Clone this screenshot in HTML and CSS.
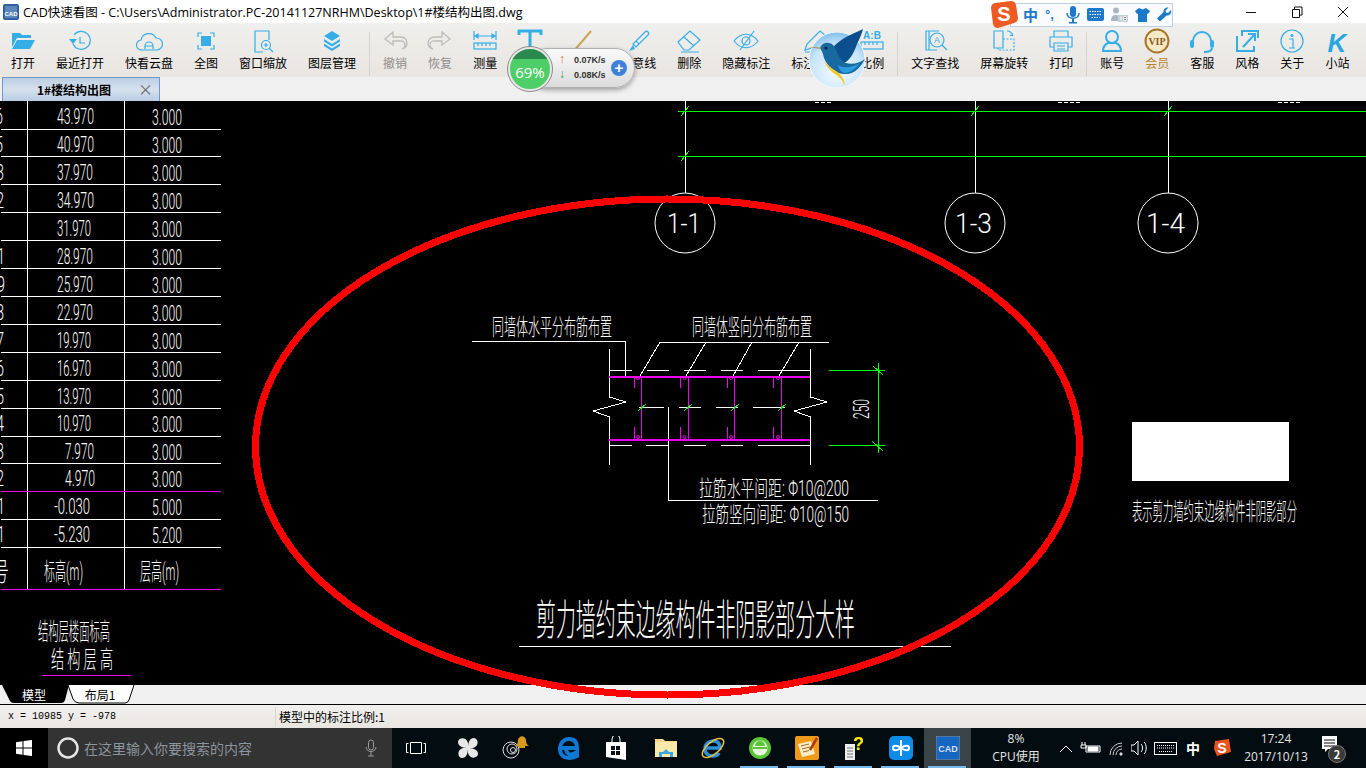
FILE: index.html
```html
<!DOCTYPE html>
<html lang="zh-CN">
<head>
  <meta charset="UTF-8">
  <link rel="stylesheet" href="styles.css">
  <title>CAD快速看图</title>
</head>
<body>
<div class="screen">

  <!-- Title bar -->
  <div class="titlebar">
    <svg class="app-icon" width="18" height="18" viewBox="0 0 18 18"><rect x="1" y="1" width="16" height="16" rx="2" fill="#2f5f9e"/><rect x="3" y="3" width="12" height="12" fill="#5f86b8"/><text x="9" y="13" class="app-icon-text">CAD</text></svg>
    <div class="title-text">CAD快速看图 - C:\Users\Administrator.PC-20141127NRHM\Desktop\1#楼结构出图.dwg</div>
    <div class="win-controls">
      <svg width="46" height="20" viewBox="0 0 46 20"><path d="M18 10.500h10" stroke="#111"/></svg>
      <svg width="46" height="20" viewBox="0 0 46 20"><path d="M18.500 7.500h7v8h-7zM20.500 7.500v-2.500h7.500v8h-2.500" fill="none" stroke="#111"/></svg>
      <svg width="46" height="20" viewBox="0 0 46 20"><path d="M18 5l10 10M28 5l-10 10" stroke="#111"/></svg>
    </div>
  </div>

  <!-- Toolbar -->
  <div class="toolbar">
    <div class="tool"><svg class="tool-icon" viewBox="0 0 28 26"><path d="M3 5h8l2 2h9v3H8l-5 9z" fill="#35aee8"/><path d="M8 12h18l-5 9H3z" fill="#35aee8"/></svg><span>打开</span></div>
    <div class="tool"><svg class="tool-icon line" viewBox="0 0 28 26"><path d="M8 7a9 9 0 1 1-1 9"/><path d="M14 9v6h5"/><path d="M3 11h8l-4 5z" class="solid"/></svg><span>最近打开</span></div>
    <div class="tool"><svg class="tool-icon line" viewBox="0 0 28 26"><path d="M7 22a5 5 0 0 1-1-10 8 8 0 0 1 15-2 6 6 0 0 1 1 12z"/><path d="M10 21v-3a4 4 0 0 1 8 0v3M10 18h8"/></svg><span>快看云盘</span></div>
    <div class="tool"><svg class="tool-icon line" viewBox="0 0 28 26"><path d="M6 9V5h4M18 5h4v4M22 17v4h-4M10 21H6v-4"/><rect x="9" y="8" width="10" height="10" class="solid"/></svg><span>全图</span></div>
    <div class="tool"><svg class="tool-icon line" viewBox="0 0 28 26"><path d="M20 12V3H6v21h8"/><circle cx="17" cy="17" r="4.500"/><path d="M20 20l4 4M15 17h4M17 15v4"/></svg><span>窗口缩放</span></div>
    <div class="tool"><svg class="tool-icon" viewBox="0 0 28 26"><path d="M14 3l8 5-8 5-8-5z" fill="#35aee8"/><path d="M6 11l8 5 8-5v2.500l-8 5-8-5zM6 15.500l8 5 8-5V18l-8 5-8-5z" fill="#35aee8"/></svg><span>图层管理</span></div>
    <div class="tool-sep"></div>
    <div class="tool tool-off"><svg class="tool-icon line-grey" viewBox="0 0 28 26"><path d="M12 4l-8 7 8 6v-4h7a4 4 0 0 1 2 8c4-1 5-4 5-6a6 6 0 0 0-6-6h-8z"/></svg><span>撤销</span></div>
    <div class="tool tool-off"><svg class="tool-icon line-grey" viewBox="0 0 28 26"><path d="M16 4l8 7-8 6v-4H9a4 4 0 0 0-2 8c-4-1-5-4-5-6a6 6 0 0 1 6-6h8z"/></svg><span>恢复</span></div>
    <div class="tool"><svg class="tool-icon line" viewBox="0 0 28 26"><path d="M3 3v9M25 3v9M4 8h20M4 8l3-2v4zM24 8l-3-2v4z"/><rect x="3" y="15" width="22" height="6"/><path d="M7 15v3M11 15v3M15 15v3M19 15v3"/></svg><span>测量</span></div>
    <div class="tool"><svg class="tool-icon line" viewBox="0 0 28 26"><path d="M3 7V3h22v4M14 3v21M9 24h10" stroke-width="3"/></svg><span>文字</span></div>
    <div class="tool tool-line"><svg class="tool-icon" viewBox="0 0 28 26"><path d="M6 24L24 3" stroke="#c9a55a" stroke-width="2"/></svg><span>画直线</span></div>
    <div class="tool"><svg class="tool-icon line" viewBox="0 0 28 26"><path d="M12 13L21 4a2 2 0 0 1 3 3l-9 9zM12 13l-3 3 3 3 3-3"/><path d="M9 17l-4 6 6-2" class="solid"/></svg><span>任意线</span></div>
    <div class="tool"><svg class="tool-icon line" viewBox="0 0 28 26"><path d="M3 14L15 3l10 9-11 10H9zM9 9l10 9M6 24h18"/></svg><span>删除</span></div>
    <div class="tool"><svg class="tool-icon line" viewBox="0 0 28 26"><path d="M2 13c7-9 17-9 24 0-7 9-17 9-24 0z"/><circle cx="14" cy="13" r="4"/><path d="M8 22L22 3"/></svg><span>隐藏标注</span></div>
    <div class="tool"><svg class="tool-icon line" viewBox="0 0 28 26"><path d="M4 22l2-6L19 3l5 4-13 13zM4 24h20"/></svg><span>标注样式</span></div>
    <div class="tool"><svg class="tool-icon line" viewBox="0 0 28 26"><text x="14" y="11" class="ab-text">A:B</text><rect x="3" y="14" width="22" height="7"/><path d="M7 14v3M11 14v3M15 14v3M19 14v3"/></svg><span>比例</span></div>
    <div class="tool-sep"></div>
    <div class="tool"><svg class="tool-icon line" viewBox="0 0 28 26"><path d="M18 3H5v19h11M8 3v19"/><circle cx="16" cy="12" r="7"/><path d="M21 17l5 5"/><text x="16" y="15" class="find-text">A</text></svg><span>文字查找</span></div>
    <div class="tool"><svg class="tool-icon line" viewBox="0 0 28 26"><path d="M4 3h9v17H4z"/><path d="M13 11h11v11H8v-2" stroke-dasharray="2 1.500"/><path d="M17 3c3 0 5 2 6 5M23 8l-3-1"/></svg><span>屏幕旋转</span></div>
    <div class="tool"><svg class="tool-icon line" viewBox="0 0 28 26"><path d="M7 9V3h14v6M7 19H3V9h22v10h-4"/><path d="M7 15h14v8H7zM10 18h8M10 21h8"/></svg><span>打印</span></div>
    <div class="tool-sep"></div>
    <div class="tool"><svg class="tool-icon line thick" viewBox="0 0 28 26"><circle cx="14" cy="9" r="6"/><path d="M5 23c0-5 3-7 5-8h8c2 1 5 3 5 8z"/></svg><span>账号</span></div>
    <div class="tool tool-vip"><svg class="tool-icon" viewBox="0 0 28 26"><circle cx="14" cy="13" r="11.500" fill="#f6e9c8" stroke="#a8742a" stroke-width="2"/><text x="14" y="16.500" class="vip-text">VIP</text></svg><span>会员</span></div>
    <div class="tool"><svg class="tool-icon line thick" viewBox="0 0 28 26"><path d="M5 13a9 9 0 0 1 18 0"/><rect x="2" y="12" width="4" height="8" rx="2" class="solid"/><rect x="22" y="12" width="4" height="8" rx="2" class="solid"/><path d="M24 20c0 3-3 4-8 4"/></svg><span>客服</span></div>
    <div class="tool"><svg class="tool-icon line thick" viewBox="0 0 28 26"><path d="M25 10V3H9v5M4 8v15h17v-5"/><path d="M10 19L22 6M15 6h7v7"/></svg><span>风格</span></div>
    <div class="tool"><svg class="tool-icon line" viewBox="0 0 28 26"><circle cx="14" cy="13" r="11"/><circle cx="14" cy="7.500" r="1.500" class="solid"/><path d="M11 11h4v9M11 20h6" /></svg><span>关于</span></div>
    <div class="tool"><svg class="tool-icon" viewBox="0 0 28 26"><text x="14" y="24" class="k-text">K</text></svg><span>小站</span></div>
  </div>

  <!-- Drawing tabs -->
  <div class="tabstrip">
    <div class="doc-tab"><span>1#楼结构出图</span><i class="doc-close">×</i></div>
  </div>

  <!-- Drawing canvas, viewBox uses screen coordinates -->
  <div class="canvas">
    <svg class="drawing" viewBox="0 101 1366 584">
      <!-- floor table -->
      <g class="cad-white">
        <path d="M27.500 101V589M124.500 101V589"/>
        <path d="M1 129.500H221M1 156.500H221M1 184.500H221M1 212.500H221M1 240.500H221M1 268.500H221M1 296.500H221M1 324.500H221M1 352.500H221M1 380.500H221M1 408.500H221M1 436.500H221M1 463.500H221M1 519.500H221M1 547.500H221"/>
      </g>
      <g class="cad-pink">
        <path d="M1 491.500H221M1 589.500H221M42 675.500H131"/>
      </g>
      <g class="cad-num">
        <text x="57" y="124" textLength="37" lengthAdjust="spacingAndGlyphs">43.970</text>
        <text x="57" y="152" textLength="37" lengthAdjust="spacingAndGlyphs">40.970</text>
        <text x="57" y="180" textLength="36" lengthAdjust="spacingAndGlyphs">37.970</text>
        <text x="57" y="208" textLength="37" lengthAdjust="spacingAndGlyphs">34.970</text>
        <text x="57" y="236" textLength="34" lengthAdjust="spacingAndGlyphs">31.970</text>
        <text x="57" y="264" textLength="36" lengthAdjust="spacingAndGlyphs">28.970</text>
        <text x="57" y="292" textLength="36" lengthAdjust="spacingAndGlyphs">25.970</text>
        <text x="57" y="320" textLength="36" lengthAdjust="spacingAndGlyphs">22.970</text>
        <text x="57" y="348" textLength="34" lengthAdjust="spacingAndGlyphs">19.970</text>
        <text x="57" y="376" textLength="34" lengthAdjust="spacingAndGlyphs">16.970</text>
        <text x="57" y="404" textLength="34" lengthAdjust="spacingAndGlyphs">13.970</text>
        <text x="57" y="431" textLength="34" lengthAdjust="spacingAndGlyphs">10.970</text>
        <text x="65" y="459" textLength="29" lengthAdjust="spacingAndGlyphs">7.970</text>
        <text x="65" y="486" textLength="30" lengthAdjust="spacingAndGlyphs">4.970</text>
        <text x="54" y="514" textLength="36" lengthAdjust="spacingAndGlyphs">-0.030</text>
        <text x="54" y="542" textLength="36" lengthAdjust="spacingAndGlyphs">-5.230</text>
        <text x="152" y="125" textLength="30" lengthAdjust="spacingAndGlyphs">3.000</text>
        <text x="152" y="153" textLength="30" lengthAdjust="spacingAndGlyphs">3.000</text>
        <text x="152" y="181" textLength="30" lengthAdjust="spacingAndGlyphs">3.000</text>
        <text x="152" y="209" textLength="30" lengthAdjust="spacingAndGlyphs">3.000</text>
        <text x="152" y="237" textLength="30" lengthAdjust="spacingAndGlyphs">3.000</text>
        <text x="152" y="265" textLength="30" lengthAdjust="spacingAndGlyphs">3.000</text>
        <text x="152" y="293" textLength="30" lengthAdjust="spacingAndGlyphs">3.000</text>
        <text x="152" y="321" textLength="30" lengthAdjust="spacingAndGlyphs">3.000</text>
        <text x="152" y="349" textLength="30" lengthAdjust="spacingAndGlyphs">3.000</text>
        <text x="152" y="377" textLength="30" lengthAdjust="spacingAndGlyphs">3.000</text>
        <text x="152" y="405" textLength="30" lengthAdjust="spacingAndGlyphs">3.000</text>
        <text x="152" y="432" textLength="30" lengthAdjust="spacingAndGlyphs">3.000</text>
        <text x="152" y="460" textLength="30" lengthAdjust="spacingAndGlyphs">3.000</text>
        <text x="152" y="487" textLength="30" lengthAdjust="spacingAndGlyphs">3.000</text>
        <text x="152" y="515" textLength="30" lengthAdjust="spacingAndGlyphs">5.000</text>
        <text x="152" y="543" textLength="30" lengthAdjust="spacingAndGlyphs">5.200</text>
        <text x="-5" y="124" textLength="8" lengthAdjust="spacingAndGlyphs">6</text>
        <text x="-5" y="152" textLength="8" lengthAdjust="spacingAndGlyphs">5</text>
        <text x="-4" y="180" textLength="8" lengthAdjust="spacingAndGlyphs">3</text>
        <text x="-4" y="208" textLength="8" lengthAdjust="spacingAndGlyphs">2</text>
        <text x="-3" y="264" textLength="8" lengthAdjust="spacingAndGlyphs">1</text>
        <text x="-3" y="292" textLength="8" lengthAdjust="spacingAndGlyphs">9</text>
        <text x="-4" y="320" textLength="8" lengthAdjust="spacingAndGlyphs">8</text>
        <text x="-4" y="348" textLength="8" lengthAdjust="spacingAndGlyphs">7</text>
        <text x="-4" y="376" textLength="8" lengthAdjust="spacingAndGlyphs">6</text>
        <text x="-4" y="404" textLength="8" lengthAdjust="spacingAndGlyphs">5</text>
        <text x="-4" y="431" textLength="8" lengthAdjust="spacingAndGlyphs">4</text>
        <text x="-4" y="459" textLength="8" lengthAdjust="spacingAndGlyphs">3</text>
        <text x="-4" y="486" textLength="8" lengthAdjust="spacingAndGlyphs">2</text>
        <text x="-3" y="514" textLength="8" lengthAdjust="spacingAndGlyphs">1</text>
        <text x="-3" y="542" textLength="8" lengthAdjust="spacingAndGlyphs">1</text>
      </g>
      <g class="cad-cn">
        <text x="-8" y="581" font-size="26" textLength="17" lengthAdjust="spacingAndGlyphs">号</text>
        <text x="44" y="580" font-size="24" textLength="39" lengthAdjust="spacingAndGlyphs">标高(m)</text>
        <text x="140" y="580" font-size="24" textLength="39" lengthAdjust="spacingAndGlyphs">层高(m)</text>
        <text x="38" y="640" font-size="24" textLength="72" lengthAdjust="spacingAndGlyphs">结构层楼面标高</text>
        <text x="51" y="668" font-size="24" textLength="62" lengthAdjust="spacingAndGlyphs">结 构 层 高</text>
      </g>

      <!-- axis lines and section bubbles -->
      <g class="cad-white">
        <path d="M685.500 101V193M975.500 101V193M1168.500 101V193"/>
        <path d="M815 102h16M1058 102h24M1278 102h22" stroke-dasharray="4 2"/>
      </g>
      <g class="cad-green">
        <path d="M678 111.500H1366M678 156.500H1366"/>
        <path d="M681 116l8-10M681 161l8-10M971 116l8-10M1164 116l8-10"/>
      </g>
      <g class="cad-round">
        <circle cx="685" cy="223" r="30"/>
        <circle cx="975" cy="223" r="30"/>
        <circle cx="1168" cy="223" r="30"/>
      </g>
      <g class="cad-num cad-big">
        <text x="667" y="233" textLength="34" lengthAdjust="spacingAndGlyphs">1-1</text>
        <text x="955" y="233" textLength="37" lengthAdjust="spacingAndGlyphs">1-3</text>
        <text x="1146" y="233" textLength="39" lengthAdjust="spacingAndGlyphs">1-4</text>
      </g>

      <!-- wall detail -->
      <g class="cad-white">
        <path d="M472 341.500H625.500V376M660 342.500H829"/>
        <path d="M660 342L640 376M706 342L686 376M752 342L733 376M799 342L779 376"/>
        <path d="M609.500 349V397L626 402L593 411L609.500 417V465"/>
        <path d="M810.500 349V397L827 402L794 411L810.500 417V465"/>
        <path d="M609 370.500H632M647 370.500H669M684 370.500H706M721 370.500H743M758 370.500H810"/>
        <path d="M609 445.500H632M646 445.500H668M684 445.500H706M721 445.500H743M758 445.500H810"/>
        <path d="M639 407.500H664M679 407.500H701M716 407.500H738M753 407.500H785"/>
        <path d="M668.500 407V500.500H878"/>
      </g>
      <g class="cad-pink">
        <path class="cad-wide" d="M609 377H810M609 440H810"/>
        <path d="M634.500 376V388M634.500 427V439M680.500 376V388M680.500 427V439M727.500 376V388M727.500 427V439M773.500 376V388M773.500 427V439"/>
        <path d="M641.500 376V439M688.500 376V439M734.500 376V439M781.500 376V439"/>
        <circle cx="638" cy="378" r="1.500"/><circle cx="684.500" cy="378" r="1.500"/><circle cx="731" cy="378" r="1.500"/><circle cx="778" cy="378" r="1.500"/>
        <circle cx="638" cy="437" r="1.500"/><circle cx="684.500" cy="437" r="1.500"/><circle cx="731" cy="437" r="1.500"/><circle cx="778" cy="437" r="1.500"/>
      </g>
      <g class="cad-green">
        <path d="M638 411l8-7M684 411l8-7M731 411l8-7M778 411l8-7"/>
        <path d="M829 370.500H885M829 445.500H885M878.500 363V453"/>
        <path d="M873 366l10 9M872 441l11 10"/>
      </g>
      <g class="cad-num cad-mid">
        <text transform="translate(869 419) rotate(-90)" textLength="20" lengthAdjust="spacingAndGlyphs">250</text>
      </g>
      <g class="cad-cn">
        <text x="492" y="335" font-size="23" textLength="120" lengthAdjust="spacingAndGlyphs">同墙体水平分布筋布置</text>
        <text x="692" y="335" font-size="23" textLength="120" lengthAdjust="spacingAndGlyphs">同墙体竖向分布筋布置</text>
        <text x="699" y="496" font-size="22" textLength="150" lengthAdjust="spacingAndGlyphs">拉筋水平间距: Φ10@200</text>
        <text x="702" y="522" font-size="22" textLength="147" lengthAdjust="spacingAndGlyphs">拉筋竖向间距: Φ10@150</text>
        <text x="536" y="635" font-size="42" textLength="319" lengthAdjust="spacingAndGlyphs">剪力墙约束边缘构件非阴影部分大样</text>
        <text x="1132" y="520" font-size="24" textLength="165" lengthAdjust="spacingAndGlyphs">表示剪力墙约束边缘构件非阴影部分</text>
      </g>
      <path class="cad-white" d="M519 646.500H951"/>
      <rect x="1132" y="422" width="157" height="59" fill="#fff"/>
    </svg>
  </div>

  <!-- Layout tabs -->
  <div class="layout-tabs">
    <div class="layout-tab layout-active">
      <svg class="tab-shape" viewBox="0 0 68 19"><path d="M1 0L9 16Q10 18 13 18H60Q63 18 64 15L68 0z" fill="#000"/></svg>
      <span>模型</span>
    </div>
    <div class="layout-tab">
      <svg class="tab-shape" viewBox="0 0 68 19"><path d="M1 0L6 14Q8 18 12 18H58Q61 18 62 15L67 0" fill="#fff" stroke="#000"/></svg>
      <span>布局1</span>
    </div>
  </div>

  <!-- Status bar -->
  <div class="statusbar">
    <div class="coords">x = 10985 y = -978</div>
    <div class="scale-info">模型中的标注比例:1</div>
  </div>

  <!-- Taskbar -->
  <div class="taskbar">
    <div class="start"><svg width="16" height="16" viewBox="0 0 16 16" fill="#fff"><path d="M0 2.200L6.500 1.300V7.500H0zM7.500 1.100L16 0V7.500H7.500zM0 8.500H6.500V14.700L0 13.800zM7.500 8.500H16V16L7.500 14.900z"/></svg></div>
    <div class="search">
      <svg width="24" height="24" viewBox="0 0 24 24"><circle cx="12" cy="12" r="9.500" fill="none" stroke="#e4e4e4" stroke-width="2.500"/></svg>
      <span class="search-text">在这里输入你要搜索的内容</span>
      <svg class="search-mic" width="12" height="18" viewBox="0 0 12 18" fill="none" stroke="#9a9a9a"><rect x="3.500" y="1" width="5" height="10" rx="2.500"/><path d="M1 8c0 6 10 6 10 0M6 13v4M3 17h6"/></svg>
    </div>
    <div class="task-view"><svg width="20" height="14" viewBox="0 0 20 14" fill="none" stroke="#fff"><path d="M4.500 1.500h11v11h-11zM2.500 2.500h-2v9h2M17.500 2.500h2v9h-2"/></svg></div>

    <div class="task-item fan"><svg width="22" height="22" viewBox="0 0 22 22" fill="#e8e8e8"><path d="M11 11C7 11 1 10 1 5c0-4 8-6 10 1zM11 11c0-4 1-10 6-10 4 0 6 8-1 10zM11 11c4 0 10 1 10 6 0 4-8 6-10-1zM11 11c0 4-1 10-6 10-4 0-6-8 1-10z"/></svg></div>
    <div class="task-item swirl"><svg width="30" height="26" viewBox="0 0 30 26"><g fill="none" stroke="#ddd"><circle cx="10" cy="15" r="8"/><circle cx="11" cy="14" r="5"/><circle cx="12" cy="15" r="2.500"/></g><path d="M14 11c2-1 3-3 3-6 1-5 7-5 8 0 0 3 1 5 3 6zM18 11h6v2h-6z" fill="#d99a20"/></svg></div>
    <div class="task-item edge"><svg width="22" height="24" viewBox="0 0 22 24"><path d="M3 12h16c0-6-3-9-8-9S2 7 2 13s4 9 9 9c3 0 6-1 8-2v-4c-3 2-6 3-8 2-2-1-3-3-3-6" fill="none" stroke="#0f78d4" stroke-width="4"/></svg></div>
    <div class="task-item"><svg width="22" height="24" viewBox="0 0 22 24"><path d="M1 6h20v18L1 21z" fill="#fff"/><path d="M7 6V3a4 4 0 0 1 8 0v3" fill="none" stroke="#fff"/><path d="M6 10h4v4H6zM11 10h4v4h-4zM6 15h4v4H6zM11 15h4v4h-4z" fill="#0a0f14"/></svg></div>
    <div class="task-item folder"><svg width="24" height="22" viewBox="0 0 24 22"><path d="M1 2h8l2 2h12v16H1z" fill="#f3d98a"/><path d="M1 5h22v15H1z" fill="#fbe9a9"/><path d="M5 20v-5h4l3-3 3 3h4v5h-3v-3H8v3z" fill="#3ba7e0"/></svg></div>
    <div class="task-item"><svg width="26" height="26" viewBox="0 0 26 26"><path d="M5 13h15c0-5-3-7-7-7s-8 3-8 8 4 7 8 7c3 0 5-1 6-3" fill="none" stroke="#2a8fdc" stroke-width="3.500"/><ellipse cx="13" cy="13" rx="13" ry="6" transform="rotate(-40 13 13)" fill="none" stroke="#e8c040" stroke-width="1.500"/></svg></div>
    <div class="task-item"><svg width="24" height="24" viewBox="0 0 24 24"><circle cx="12" cy="12" r="11" fill="#5cc437"/><circle cx="12" cy="12" r="7.500" fill="#e8f6df"/><path d="M5 12h14" stroke="#5cc437" stroke-width="2"/><path d="M7 10a5 5 0 0 1 10 0z" fill="#5cc437"/></svg></div>
    <div class="task-item"><svg width="24" height="24" viewBox="0 0 24 24"><rect width="24" height="24" rx="2" fill="#f09a1a"/><path d="M3 8l13-3 4 13-13 3z" fill="#fbecc4"/><path d="M6 10l8-2M7 13l8-2M8 16l6-1.500" stroke="#a06a30"/><path d="M15 14L22 2" stroke="#b03a10" stroke-width="2.500"/></svg></div>
    <div class="task-item"><svg width="18" height="24" viewBox="0 0 18 24"><path d="M0 8h10v16H0z" fill="#eee"/><path d="M2 12h6M2 15h6M2 18h6M2 21h6" stroke="#777"/><text x="8" y="14" class="help-text">?</text></svg></div>
    <div class="task-item"><svg width="24" height="24" viewBox="0 0 24 24"><rect width="24" height="24" rx="5" fill="#0f8be8"/><path d="M12 4v16M4 12c0-3 4-3 8 0s8 3 8 0-4-3-8 0-8 3-8 0z" fill="none" stroke="#fff" stroke-width="2"/></svg></div>
    <div class="task-item task-active"><svg width="24" height="24" viewBox="0 0 24 24"><rect width="24" height="24" rx="2" fill="#1466c0" stroke="#888"/><text x="12" y="16" class="cad-app-text">CAD</text></svg></div>

    <div class="cpu"><div>8%</div><div>CPU使用</div></div>

    <div class="tray">
      <svg width="26" height="40" viewBox="0 0 26 40" fill="none" stroke="#fff"><path d="M7 24l6-6 6 6"/></svg>
      <svg width="24" height="40" viewBox="0 0 24 40" fill="none" stroke="#fff"><path d="M3 14v3M6 14v3M2 17h5v3H2zM7 18h14v6H7z"/><path d="M9 19h10v4H9z" fill="#fff"/></svg>
      <svg width="28" height="40" viewBox="0 0 28 40" fill="none" stroke="#ccc"><path d="M7 27a12 12 0 0 1 12-12M10 27a9 9 0 0 1 9-9M13 27a6 6 0 0 1 6-6"/><circle cx="18" cy="26" r="1.200" fill="#fff"/></svg>
      <svg width="16" height="40" viewBox="0 0 16 40" fill="none" stroke="#fff"><path d="M0 17h3l4-4v14l-4-4H0zM10 16c2 2 2 6 0 8M13 14c3 3 3 9 0 12"/></svg>
      <svg width="36" height="40" viewBox="0 0 36 40" fill="none" stroke="#fff"><rect x="7.500" y="14.500" width="22" height="12"/><path d="M10 17.500h17M10 20h17M12 23.500h13" stroke-dasharray="1 1"/></svg>
      <div class="tray-zh">中</div>
      <svg width="36" height="40" viewBox="0 0 36 40"><path d="M12 13l14-2 2 13-14 4-3-7z" fill="#e9531d"/><text x="19" y="25" class="sogou-text">S</text></svg>
    </div>
    <div class="clock"><div>17:24</div><div>2017/10/13</div></div>
    <div class="notify">
      <svg width="24" height="26" viewBox="0 0 24 26"><path d="M1 1h15v13h-9l-3 3v-3H1z" fill="#fff"/><path d="M3 5h11M3 8h11M3 11h11" stroke="#111"/></svg>
      <span class="notify-badge">2</span>
    </div>
  </div>

  <!-- Red annotation ellipse over the drawing -->
  <svg class="annotation" viewBox="0 0 1366 768"><ellipse cx="667.500" cy="447" rx="412" ry="248"/></svg>

  <!-- Net speed widget -->
  <div class="speed-widget">
    <div class="speed-ball"><span>69%</span></div>
    <div class="speed-rows">
      <div class="speed-row"><i class="speed-up">↑</i>0.07K/s</div>
      <div class="speed-row"><i class="speed-down">↓</i>0.08K/s</div>
    </div>
    <div class="speed-plus">+</div>
  </div>

  <!-- Bird badge -->
  <svg class="bird" width="60" height="62" viewBox="0 0 60 62">
    <defs>
      <radialGradient id="birdBg" cx="0.5" cy="0.7" r="0.7"><stop offset="0" stop-color="#f4fbff"/><stop offset="0.7" stop-color="#c5e4fa"/><stop offset="1" stop-color="#7fbdec"/></radialGradient>
    </defs>
    <circle cx="29" cy="33" r="28" fill="url(#birdBg)" stroke="#f4f8fb" stroke-width="1"/>
    <path d="M55 2C47 6 37 9 27 18C23 23 25 32 32 36C40 38 46 26 49 17C52 11 54 6 55 2z" fill="#0b4f8e"/>
    <path d="M12 21C14 15 22 14 26 19C30 26 32 34 38 36C44 38 52 36 57 32C52 41 46 47 38 47C30 48 20 41 16 31C15 26 14 24 12 21z" fill="#17699f"/>
    <path d="M30 38C36 42 46 40 52 36C47 43 41 46 36 46C33 45 31 42 30 38z" fill="#2c9be0"/>
    <path d="M0 20L13 20.500 13 22z" fill="#a88a3a"/>
    <path d="M16 34C20 44 28 47 33 52C35 55 37 58 37 60C37 52 33 47 28 44C23 41 19 38 16 34z" fill="#f0cc30"/>
    <circle cx="18" cy="21" r="1.500" fill="#06243e"/>
  </svg>

  <!-- IME bar -->
  <div class="ime">
    <svg class="ime-logo" width="28" height="27" viewBox="0 0 28 27"><path d="M1 7Q1 3 5 2L21 0Q25 0 26 4L28 17Q28 21 24 22L8 27Q4 27 3 23z" fill="#ee5a24"/><text x="14" y="20" class="ime-s">S</text></svg>
    <span class="ime-zh">中</span>
    <span class="ime-dot">°,</span>
    <svg width="14" height="18" viewBox="0 0 14 18" fill="#1c78c8"><rect x="4" y="0" width="6" height="11" rx="3"/><path d="M1 7c0 7 12 7 12 0" fill="none" stroke="#1c78c8" stroke-width="1.500"/><path d="M6 13h2v3h3v1.500H3V16h3z"/></svg>
    <svg width="17" height="13" viewBox="0 0 17 13"><rect width="17" height="13" rx="2" fill="#1c78c8"/><path d="M2.500 3.500h12M2.500 6.500h12M4.500 9.500h8" stroke="#fff" stroke-dasharray="1.500 1"/></svg>
    <svg width="17" height="16" viewBox="0 0 17 16"><circle cx="5" cy="3.500" r="3" fill="#a9b6c2"/><path d="M0 14c0-5 2-6 5-6s5 1 5 3v3z" fill="#a9b6c2"/><rect x="7" y="8" width="10" height="7" fill="#c6d0d8"/><path d="M10 9.500v4M13 9.500h2v4h-2zM13 11.500h2" stroke="#fff"/></svg>
    <svg width="15" height="14" viewBox="0 0 15 14" fill="#1c78c8"><path d="M4 0L7.500 1.500 11 0l4 3-2 3-1-.500V14H3V5.500L2 6 0 3z"/></svg>
    <svg width="15" height="15" viewBox="0 0 15 15" fill="#1c78c8"><path d="M14 3l-3 3-2-.500L8.500 3.500 11.500 .500C9 0 6 2 6.500 5L0 11.500 3 14.500 9.500 8.500C12.500 9 15 6 14 3z"/></svg>
  </div>
</div>
</body>
</html>
```

FILE: styles.css
```css
html, body {
  margin: 0;
  padding: 0;
}
body {
  font-family: "Noto Sans CJK SC", "Noto Sans", sans-serif;
  font-size: 12px;
  color: #000;
}
.screen {
  position: relative;
  width: 1366px;
  height: 768px;
  overflow: hidden;
  display: flex;
  flex-direction: column;
  background: #000;
}

/* title bar */
.titlebar {
  height: 23px;
  background: #fff;
  display: flex;
  align-items: center;
}
.app-icon {
  margin-left: 2px;
  flex: none;
}
.app-icon-text {
  font: bold 6px "Liberation Sans", sans-serif;
  fill: #fff;
  text-anchor: middle;
}
.title-text {
  margin-left: 3px;
  font-family: "Open Sans", "Noto Sans CJK SC", sans-serif;
  font-size: 12.5px;
  white-space: nowrap;
}
.win-controls {
  margin-left: auto;
  display: flex;
}

/* toolbar */
.toolbar {
  height: 54px;
  box-sizing: border-box;
  padding: 5px 0 0 11px;
  background: linear-gradient(#efefed, #e9e5e1);
  display: flex;
  gap: 21px;
}
.tool {
  display: flex;
  flex-direction: column;
  align-items: center;
  line-height: 16px;
  white-space: nowrap;
}
.tool-icon {
  width: 28px;
  height: 26px;
  margin: 0 -6px 1px;
  flex: none;
}
.tool-off {
  color: #8e8e8e;
}
.tool-vip {
  color: #b8862e;
}
.tool-sep {
  width: 1px;
  height: 44px;
  margin: 4px -8px 0;
  background: #d5d3d0;
}
.line {
  fill: none;
  stroke: #35aee8;
  stroke-width: 1.2;
}
.thick {
  stroke-width: 2;
}
.line-grey {
  fill: none;
  stroke: #bcbcbc;
  stroke-width: 1.3;
}
.solid {
  fill: #35aee8;
  stroke: none;
}
.ab-text {
  font: bold 10px "Liberation Sans", sans-serif;
  fill: #35aee8;
  stroke: none;
  text-anchor: middle;
}
.find-text {
  font: 9px "Liberation Sans", sans-serif;
  fill: #35aee8;
  stroke: none;
  text-anchor: middle;
}
.vip-text {
  font: bold 10px "Liberation Serif", serif;
  fill: #8a5a18;
  text-anchor: middle;
}
.k-text {
  font: italic bold 26px "Liberation Sans", sans-serif;
  fill: #28a6e0;
  text-anchor: middle;
}

/* document tab */
.tabstrip {
  height: 24px;
  background: #f0f0f0;
  padding-left: 2px;
  display: flex;
}
.doc-tab {
  width: 158px;
  box-sizing: border-box;
  border: 1px solid #6f97c9;
  border-bottom: none;
  background: linear-gradient(#bccfe5, #d6e1ee 50%, #b9cde4);
  display: flex;
  align-items: center;
  justify-content: center;
  font-weight: bold;
  position: relative;
  padding-right: 14px;
}
.doc-close {
  position: absolute;
  right: 6px;
  top: 1px;
  font-style: normal;
  font-weight: normal;
  font-size: 15px;
  line-height: 20px;
  color: #666;
}

/* drawing canvas */
.canvas {
  height: 584px;
  background: #000;
  flex: none;
}
.drawing {
  display: block;
  width: 1366px;
  height: 584px;
}
.cad-white path, path.cad-white {
  fill: none;
  stroke: #fff;
  shape-rendering: crispEdges;
}
.cad-white path {
  stroke-width: 1;
}
.cad-green path {
  fill: none;
  stroke: #00ff00;
  stroke-width: 1;
  shape-rendering: crispEdges;
}
.cad-pink path {
  fill: none;
  stroke: #f000f0;
  stroke-width: 1;
  shape-rendering: crispEdges;
}
.cad-pink path.cad-wide {
  stroke-width: 2;
}
.cad-pink circle {
  fill: none;
  stroke: #f000f0;
}
.cad-round circle {
  fill: none;
  stroke: #fff;
}
.cad-num text {
  font-family: Roboto, "Liberation Sans", sans-serif;
  font-weight: 300;
  font-size: 22px;
  fill: #fff;
}
.cad-big text {
  font-size: 28px;
}
.cad-mid text {
  font-size: 22px;
}
.cad-cn text {
  font-family: Roboto, "Noto Sans CJK SC", sans-serif;
  font-weight: 300;
  fill: #fff;
}

/* red ellipse annotation */
.annotation {
  position: absolute;
  left: 0;
  top: 0;
  width: 1366px;
  height: 768px;
  pointer-events: none;
}
.annotation ellipse {
  fill: none;
  stroke: #ff0000;
  stroke-width: 7;
  shape-rendering: crispEdges;
}

/* layout tabs */
.layout-tabs {
  height: 20px;
  box-sizing: border-box;
  background: #f0f0f0;
  border-bottom: 1px solid #000;
  display: flex;
  padding-left: 1px;
}
.layout-tab {
  position: relative;
  width: 66px;
  height: 19px;
  display: flex;
  align-items: center;
  justify-content: center;
  line-height: 19px;
}
.layout-active {
  color: #fff;
}
.tab-shape {
  position: absolute;
  left: 0;
  top: 0;
  width: 68px;
  height: 19px;
}
.layout-tab span {
  position: relative;
}

/* status bar */
.statusbar {
  height: 23px;
  background: linear-gradient(#f2f0ee, #e9e6e2);
  display: flex;
  align-items: center;
}
.coords {
  width: 267px;
  padding-left: 8px;
  font-family: "Liberation Mono", monospace;
  font-size: 10px;
}
.scale-info {
  border-left: 1px solid #d8d6d3;
  padding-left: 3px;
  line-height: 20px;
}

/* taskbar */
.taskbar {
  height: 40px;
  flex: none;
  background: #020c11;
  display: flex;
  align-items: center;
  color: #fff;
}
.start {
  width: 48px;
  height: 40px;
  background: #000;
  display: flex;
  align-items: center;
  justify-content: center;
}
.search {
  width: 344px;
  height: 40px;
  box-sizing: border-box;
  padding-left: 8px;
  background: #333;
  display: flex;
  align-items: center;
}
.search-text {
  margin-left: 4px;
  font-size: 14px;
  color: #8c949c;
}
.search-mic {
  margin-left: auto;
  margin-right: 15px;
}
.task-view {
  width: 48px;
  display: flex;
  justify-content: center;
}
.task-item {
  position: relative;
  width: 47px;
  height: 40px;
  flex: none;
  display: flex;
  align-items: center;
  justify-content: center;
}
.fan { margin-left: 4px; }
.swirl { margin-left: 1px; }
.edge { margin-left: 6px; }
.folder { margin-left: 3px; }
.task-item:nth-of-type(n+10)::after {
  content: "";
  position: absolute;
  left: 4px;
  right: 5px;
  bottom: 0;
  height: 2px;
  background: #76b9ed;
}
.task-active {
  background: #3a4448;
}
.help-text {
  font: bold 18px "Liberation Sans", sans-serif;
  fill: #ffee00;
}
.cad-app-text {
  font: bold 9px "Liberation Sans", sans-serif;
  fill: #dde;
  text-anchor: middle;
}
.cpu {
  width: 60px;
  margin-left: 15px;
  text-align: center;
  line-height: 18px;
  font-family: "Open Sans", "Noto Sans CJK SC", sans-serif;
  color: #e4e4e4;
}
.tray {
  margin-left: 7px;
  display: flex;
  align-items: center;
}
.tray-zh {
  width: 20px;
  text-align: center;
  font-size: 14px;
  font-weight: bold;
}
.sogou-text {
  font: bold 14px "Liberation Sans", sans-serif;
  fill: #fff;
  text-anchor: middle;
}
.clock {
  width: 74px;
  text-align: center;
  line-height: 18px;
  font-family: "Open Sans", sans-serif;
  color: #e4e4e4;
  white-space: nowrap;
}
.notify {
  position: relative;
  margin-left: 8px;
  width: 24px;
  height: 26px;
}
.notify-badge {
  position: absolute;
  left: 7px;
  top: 10px;
  width: 16px;
  height: 16px;
  border-radius: 50%;
  background: #3a3a3a;
  border: 1px solid #777;
  text-align: center;
  line-height: 16px;
  font-size: 11px;
  font-weight: bold;
}

/* net speed widget */
.speed-widget {
  position: absolute;
  left: 507px;
  top: 47px;
  width: 128px;
  height: 43px;
}
.speed-widget::before {
  content: "";
  position: absolute;
  left: 20px;
  right: 0;
  top: 1px;
  bottom: 2px;
  border: 1px solid #b0b0b0;
  border-radius: 20px;
  background: linear-gradient(#fafafa, #dcdcdc);
  box-shadow: 0 2px 5px rgba(0,0,0,0.35);
}
.speed-ball {
  position: absolute;
  left: 1px;
  top: 0;
  width: 40px;
  height: 40px;
  border: 2px solid #e8e8e8;
  outline: 1px solid #8a8a8a;
  border-radius: 50%;
  background: linear-gradient(#2a8a4e 26%, #4dce66 26%);
  color: #fff;
  font-family: "Open Sans", sans-serif;
  font-size: 15px;
  text-align: center;
  line-height: 46px;
  box-sizing: content-box;
}
.speed-rows {
  position: absolute;
  left: 52px;
  top: 5px;
  font-family: "Liberation Sans", sans-serif;
  font-size: 9px;
  font-weight: bold;
  color: #333;
}
.speed-row {
  height: 15px;
  line-height: 15px;
  white-space: nowrap;
}
.speed-row i {
  display: inline-block;
  width: 15px;
  font-style: normal;
  font-size: 12px;
  font-weight: bold;
}
.speed-up { color: #e8604c; }
.speed-down { color: #3a9a50; }
.speed-plus {
  position: absolute;
  left: 104px;
  top: 13px;
  width: 16px;
  height: 16px;
  border-radius: 50%;
  background: #3d82d8;
  color: #fff;
  text-align: center;
  font: bold 15px/15px "Liberation Sans", sans-serif;
}

/* bird badge */
.bird {
  position: absolute;
  left: 808px;
  top: 27px;
}

/* IME bar */
.ime {
  position: absolute;
  left: 990px;
  top: 2px;
  width: 183px;
  height: 25px;
  display: flex;
  align-items: center;
  gap: 7px;
}
.ime::before {
  content: "";
  position: absolute;
  left: 20px;
  right: 0;
  top: 1px;
  bottom: 0;
  background: #f9fbff;
  border: 1px solid #bcd0e4;
}
.ime > * {
  position: relative;
  flex: none;
}
.ime-s {
  font: bold 20px "Liberation Sans", sans-serif;
  fill: #fff;
  text-anchor: middle;
}
.ime-zh {
  font-size: 15px;
  font-weight: bold;
  color: #1c78c8;
  margin-left: -2px;
}
.ime-dot {
  width: 14px;
  font: bold 13px "Liberation Sans", sans-serif;
  color: #1c78c8;
}
```
